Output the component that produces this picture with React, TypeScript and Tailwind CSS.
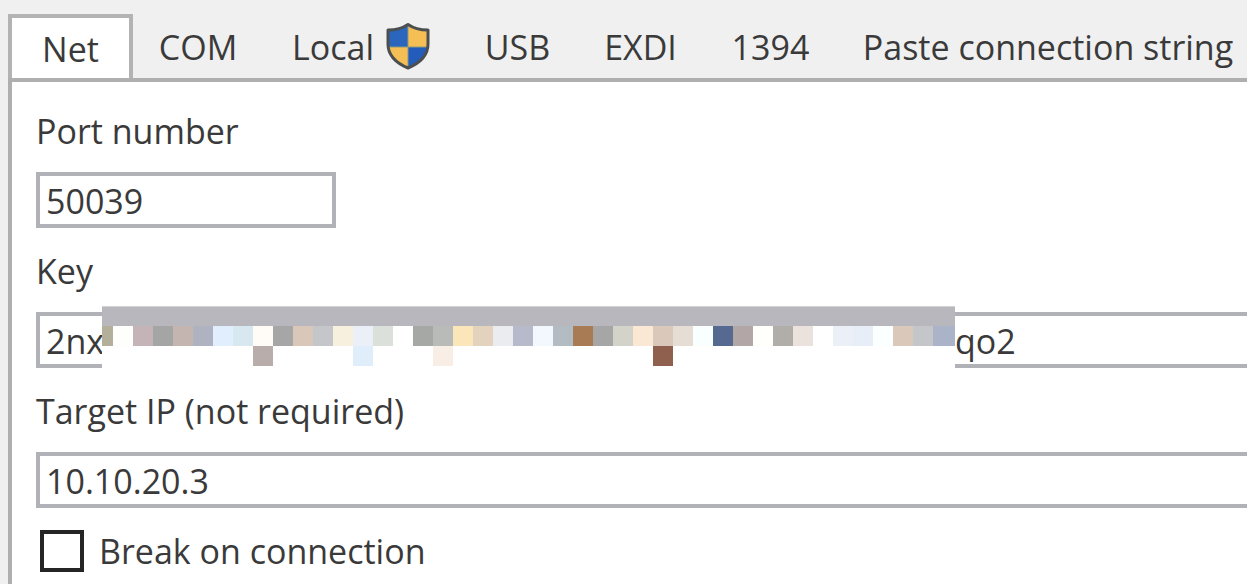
import { useState } from "react";
import type { ReactNode } from "react";

function ShieldIcon() {
  return (
    <svg viewBox="0 0 44 48" className="h-12 w-11 shrink-0" aria-hidden="true">
      <defs>
        <clipPath id="shield-body">
          <path d="M22 1C17 5 10 7 2 7V21C2 32 10 40 22 45C34 40 42 32 42 21V7C34 7 27 5 22 1Z" />
        </clipPath>
      </defs>
      <g clipPath="url(#shield-body)">
        <rect width="22" height="24" fill="#2a66bd" />
        <rect x="22" width="22" height="24" fill="#f5bf55" />
        <rect y="24" width="22" height="24" fill="#f5bf55" />
        <rect x="22" y="24" width="22" height="24" fill="#235cbb" />
        <path d="M22 0V48M0 24H44" stroke="#8f9a78" strokeWidth="1" />
      </g>
      <path
        d="M22 1.5C17 5 10 7 2 7V21C2 32 10 40 22 45C34 40 42 32 42 21V7C34 7 27 5 22 1.5Z"
        fill="none"
        stroke="#4b4f50"
        strokeWidth="3"
        strokeLinejoin="round"
      />
    </svg>
  );
}

const tabs: { name: string; width: string; icon?: ReactNode }[] = [
  { name: "Net", width: "w-[125px]" },
  { name: "COM", width: "w-[130px]" },
  { name: "Local", width: "w-[196px]", icon: <ShieldIcon /> },
  { name: "USB", width: "w-[117px]" },
  { name: "EXDI", width: "w-[129px]" },
  { name: "1394", width: "w-[131px]" },
  { name: "Paste connection string", width: "w-[424px]" },
];

const upperCells = [
  "#fefffc", "#c4b4b8", "#a5a5a5", "#c4b5b0", "#aeb2c1", "#e0eefd", "#d7e8f0",
  "#fffbf6", "#a6a6a6", "#d9c7b9", "#c5c6ca", "#f7f0df", "#ebeff8", "#dbe0da",
  "#ffffff", "#a6a8a6", "#b8bbb7", "#fae6b8", "#e3d2be", "#ebecf0", "#b6bacb",
  "#f3f8ff", "#b3bbc3", "#a87b55", "#a6a6a6", "#d3d3ca", "#fae8d5", "#dac8ba",
  "#e6ddd5", "#f9ffff", "#566991", "#b2a7a6", "#fffffc", "#b1ada9", "#ebe2dd",
  "#ffffff", "#ebf0f8", "#e7eef8", "#fbffff", "#dac8ba", "#c5c6ca", "#abb3c8",
];

const lowerCells: [number, string][] = [
  [7, "#b8adaa"],
  [12, "#e0eefc"],
  [16, "#f9eee5"],
  [27, "#90604f"],
];

function KeyMosaic() {
  return (
    <svg
      viewBox="0 0 853 62"
      className="absolute -top-[10px] left-0 h-[62px] w-[853px]"
      shapeRendering="crispEdges"
      aria-hidden="true"
    >
      <rect width="853" height="62" fill="#ffffff" />
      <rect width="853" height="20" fill="#b7b7bd" />
      <rect width="853" height="1" fill="#d2d2d5" />
      <rect y="20" width="11" height="20" fill="#b4af9a" />
      {upperCells.map((color, i) => (
        <rect key={i} x={11 + i * 20} y="20" width={i === 41 ? 22 : 20} height="20" fill={color} />
      ))}
      {lowerCells.map(([i, color]) => (
        <rect key={i} x={11 + i * 20} y="40" width="20" height="20" fill={color} />
      ))}
    </svg>
  );
}

export default function App() {
  const [active, setActive] = useState("Net");

  return (
    <div className="flex min-h-screen flex-col overflow-hidden bg-[#f0f0f0] pl-2 pt-[14px] font-['Open_Sans','Noto_Sans',sans-serif] text-[34px] leading-[48px] text-[#3a3a3a]">
      <div role="tablist" className="flex">
        {tabs.map(({ name, width, icon }) => (
          <button
            key={name}
            type="button"
            role="tab"
            aria-selected={active === name}
            onClick={() => setActive(name)}
            className={`flex h-16 shrink-0 items-center justify-center gap-3 whitespace-nowrap border-4 border-b-0 ${width} ${
              active === name ? "border-[#b3b3b3] bg-white pt-[2px]" : "border-transparent pb-[2px]"
            }`}
          >
            {name}
            {icon}
          </button>
        ))}
      </div>

      <form className="flex grow flex-col border-l-4 border-t-4 border-[#afafaf] bg-white pb-2 pl-6 pt-[25px]">
        <label htmlFor="port">Port number</label>
        <input
          id="port"
          defaultValue="50039"
          className="mt-[17px] h-14 w-[300px] border-4 border-[#b1b1b8] bg-white px-[6px] pt-[2px] outline-none"
        />

        <label htmlFor="key" className="mt-[19px]">Key</label>
        <div className="mt-[17px] flex h-14 border-4 border-r-0 border-[#b1b1b8] bg-white pl-[6px]">
          <input id="key" defaultValue="2nx" className="w-14 bg-transparent pt-[2px] outline-none" />
          <div className="relative w-[853px] shrink-0">
            <KeyMosaic />
          </div>
          <input aria-label="Key ending" defaultValue="qo2" className="min-w-0 grow bg-transparent pt-[2px] outline-none" />
        </div>

        <label htmlFor="target" className="mt-[19px]">Target IP (not required)</label>
        <input
          id="target"
          defaultValue="10.10.20.3"
          className="mt-[17px] h-14 border-4 border-r-0 border-[#b1b1b8] bg-white px-[6px] pt-[2px] outline-none"
        />

        <label className="mt-[19px] flex items-center gap-[15px] pl-1">
          <input
            type="checkbox"
            className="h-[42px] w-11 shrink-0 appearance-none border-4 border-[#252525] bg-white checked:bg-[#252525]"
          />
          Break on connection
        </label>
      </form>
    </div>
  );
}
